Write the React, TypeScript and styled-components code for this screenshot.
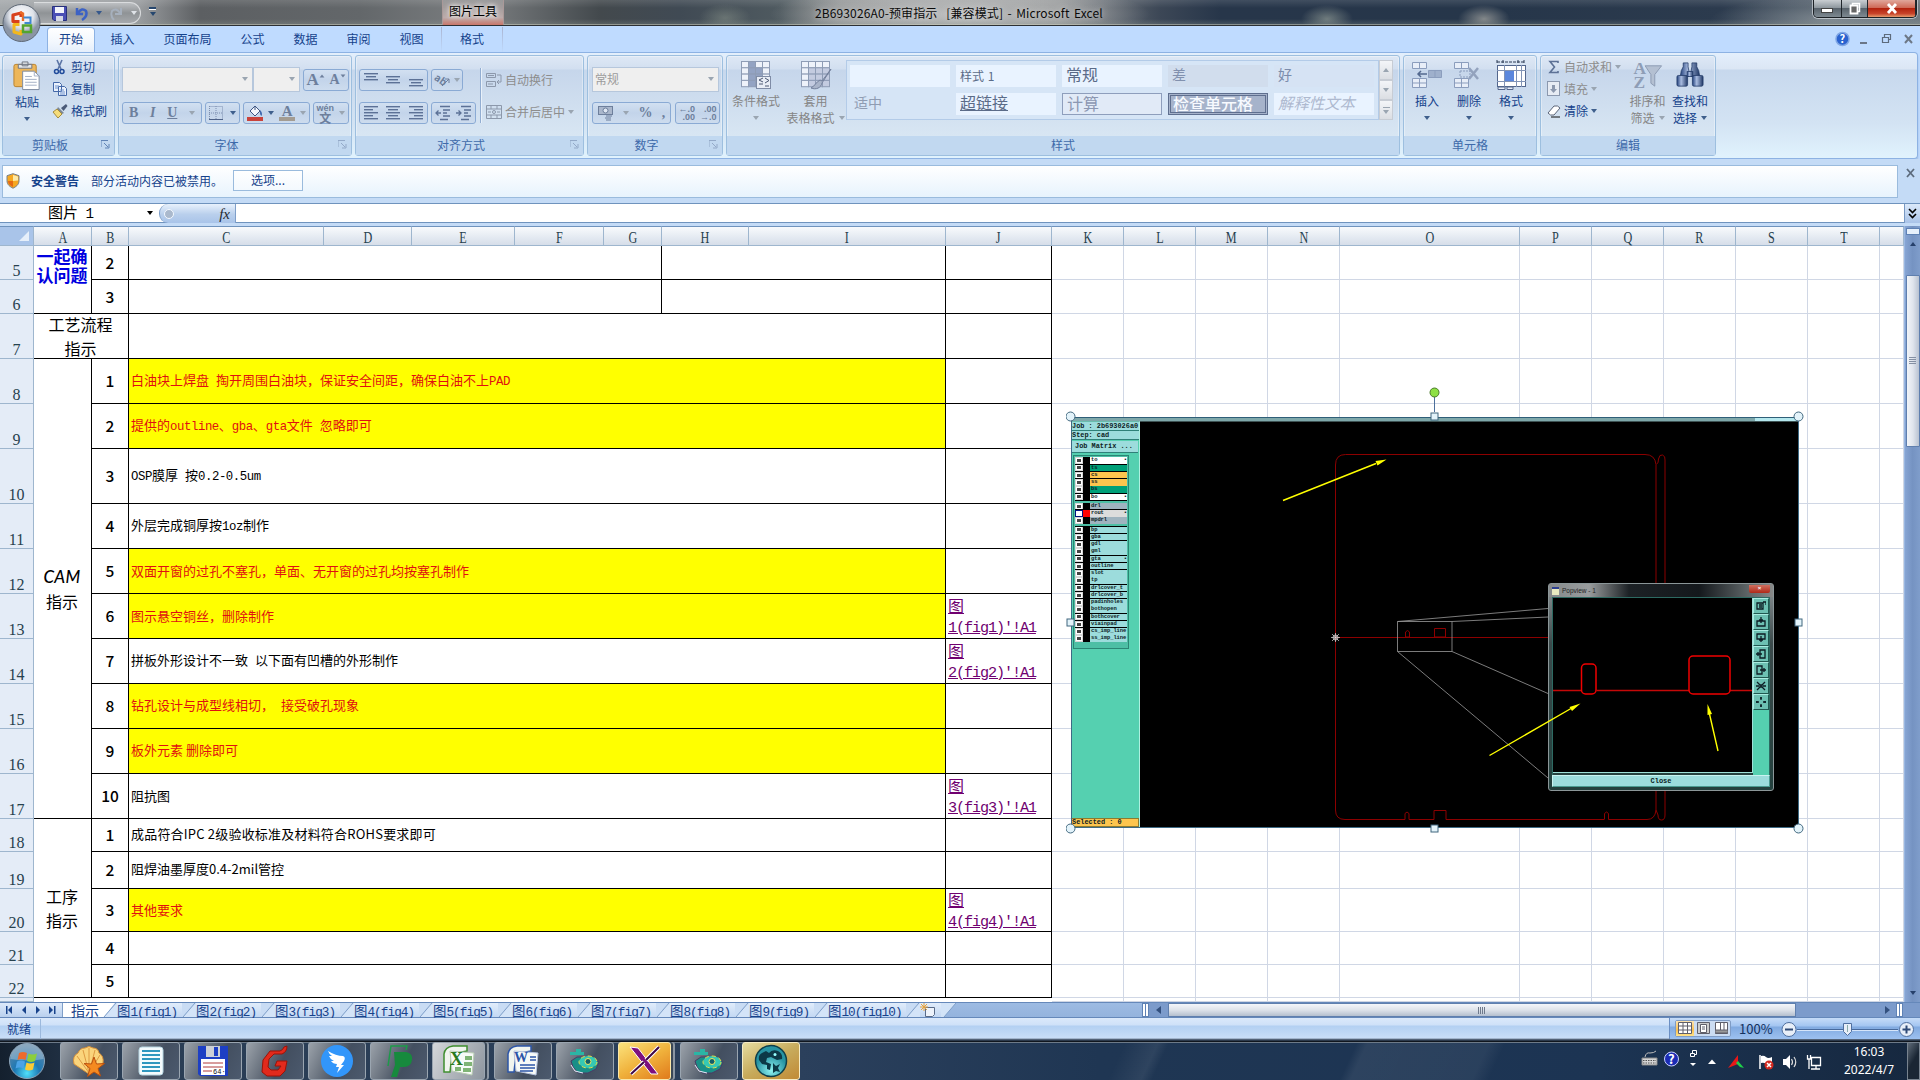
import React from 'react';
import styled, { createGlobalStyle, css } from 'styled-components';

const UI = `"Noto Sans CJK SC", "Liberation Sans", sans-serif`;

const Global = createGlobalStyle`
  * { box-sizing: border-box; }
  body { margin: 0; background: #fff; overflow: hidden; }
`;

const Screen = styled.div`
  width: 1920px;
  height: 1080px;
  display: flex;
  flex-direction: column;
  overflow: hidden;
  position: relative;
  font-family: ${UI};
  font-size: 12px;
  line-height: 16px;
  color: #15428b;
  background: #bfdbff;
  white-space: nowrap;
`;

/* ---------- title bar ---------- */
const TitleBar = styled.div`
  height: 26px;
  flex: none;
  display: flex;
  align-items: flex-start;
  border-bottom: 1px solid #2c3034;
  background:
    linear-gradient(180deg, rgba(255,255,255,.12) 0, transparent 8px, transparent 19px, rgba(150,160,150,.25) 24px, #cfd0c0 25px),
    radial-gradient(ellipse 190px 30px at 960px 14px, rgba(215,215,215,.7), rgba(190,190,190,.5) 60%, transparent),
    radial-gradient(ellipse 26px 14px at 725px 18px, rgba(140,150,140,.5), transparent),
    radial-gradient(ellipse 26px 14px at 1327px 19px, rgba(160,170,160,.6), transparent),
    radial-gradient(ellipse 26px 14px at 1484px 19px, rgba(170,170,165,.7), transparent),
    radial-gradient(ellipse 120px 24px at 1830px 20px, rgba(160,168,172,.6), transparent),
    linear-gradient(90deg, #a5a9ac 0, #989b9e 140px, #5c5f62 200px, #63676a 360px, #7c7f81 480px, #43494d 600px, #404a54 680px, #4f5a60 780px, #848889 840px, #808486 1060px, #3c4756 1160px, #27364a 1220px, #26364a 1500px, #2c3b4e 1720px, #69737b 1920px);
`;
const QuickAccess = styled.div`
  margin: 2px 0 0 34px;
  width: 107px;
  height: 22px;
  padding-left: 18px;
  display: flex;
  align-items: center;
  gap: 7px;
  border: 1px solid #dadcde;
  border-left: none;
  border-radius: 0 11px 11px 0;
  background: linear-gradient(#bcbfc2, #8f9396 50%, #a6a9ac);
`;
const Customize = styled.div`
  margin: 7px 0 0 7px;
  width: 9px;
  display: flex;
  flex-direction: column;
  align-items: center;
  gap: 2px;
  &::before { content: ''; width: 7px; height: 2px; background: #26466e; border-bottom: 1px solid #fff; }
`;
const ContextTitle = styled.div`
  margin-left: 285px;
  width: 62px;
  height: 25px;
  text-align: center;
  line-height: 22px;
  color: #000;
  background: linear-gradient(rgba(170,168,168,.55), rgba(200,180,178,.85) 70%, #c9766a);
  text-shadow: 0 0 4px #fff, 0 0 6px #fff;
  border: solid #a99;
  border-width: 0 1px;
`;
const DocTitle = styled.div`
  margin-left: 311px;
  width: 300px;
  height: 25px;
  line-height: 25px;
  color: #0a0a0a;
  text-shadow: 0 0 6px #ddd;
  letter-spacing: 0.12px;
  word-spacing: 1.6px;
`;
const WinButtons = styled.div`
  margin-left: auto;
  margin-right: 3px;
  display: flex;
  height: 18px;
  width: 104px;
  border: 1px solid #1c2126;
  border-top: 0;
  border-radius: 0 0 5px 5px;
  box-shadow: 0 0 0 1px rgba(230,235,240,.6);
  overflow: hidden;
`;
const WinButton = styled.div<{ $w: number; $close?: boolean }>`
  width: ${p => p.$w}px;
  display: flex;
  align-items: center;
  justify-content: center;
  border-right: 1px solid #20262c;
  background: ${p => p.$close
    ? 'linear-gradient(#e0a79b, #cf6a57 45%, #b3230e 50%, #c8432a 80%, #e59a6c)'
    : 'linear-gradient(#c9ced2, #8f989f 45%, #59636c 50%, #7f8a92)'};
`;

/* ---------- ribbon tabs ---------- */
const TabRow = styled.div`
  height: 26px;
  flex: none;
  display: flex;
  align-items: flex-end;
  padding-left: 47px;
  background: #bfdbff;
`;
const Tab = styled.div<{ $active?: boolean; $context?: boolean }>`
  height: 25px;
  padding: 0 14.5px;
  line-height: 23px;
  ${p => p.$active && css`
    padding: 0 11px;
    margin-right: 1px;
    border: 1px solid #8db2e3;
    border-bottom: 0;
    border-radius: 4px 4px 0 0;
    line-height: 22px;
    background: linear-gradient(#fff, #f2f7fd 60%, #e4eefb);
  `}
  ${p => p.$context && css`
    margin-left: 3px;
    padding: 0 18px;
    border: solid;
    border-width: 0 1px;
    border-image: linear-gradient(#a9b3cf, #bfdbff) 1;
  `}
`;
const MdiButtons = styled.div`
  margin-left: auto;
  height: 26px;
  padding-right: 1px;
  display: flex;
  align-items: center;
`;

/* ---------- ribbon ---------- */
const Ribbon = styled.div`
  height: 107px;
  margin-right: 2px;
  flex: none;
  display: flex;
  padding: 2px 0 0 2px;
  gap: 3px;
  border: 1px solid #8db2e3;
  border-left: 0;
  border-radius: 0 4px 4px 0;
  background: linear-gradient(#e3effc 0, #dbe6f4 16px, #c7d8ed 17px, #d3e3f3 70px, #e0f2fd 104px);
  box-shadow: 0 2px 2px #9db8da;
`;
const Group = styled.div<{ $w: number }>`
  width: ${p => p.$w}px;
  height: 101px;
  flex: none;
  display: flex;
  flex-direction: column;
  border: 1px solid #9dbfdf;
  border-radius: 3px;
  background: linear-gradient(#dee8f5 0, #d2dff0 13px, #c6d6eb 14px, #d8e6f3 80px);
  box-shadow: inset 0 0 0 1px rgba(255,255,255,.35);
`;
const GroupBody = styled.div<{ $pad?: string; $gap?: number }>`
  height: 80px;
  display: flex;
  padding: ${p => p.$pad || '0'};
  gap: ${p => p.$gap || 0}px;
`;
const GroupLabel = styled.div`
  height: 19px;
  position: relative;
  display: flex;
  justify-content: center;
  line-height: 18px;
  padding-right: 17px;
  color: #3e6aaa;
  background: #c1d8f0;
  &.plain { padding-right: 0; }
`;
const Launcher = styled.svg`
  position: absolute;
  right: 4px;
  top: 4px;
`;
const Stack = styled.div<{ $gap?: number; $pad?: string }>`
  display: flex;
  flex-direction: column;
  gap: ${p => p.$gap || 0}px;
  padding: ${p => p.$pad || '0'};
`;
const Line = styled.div<{ $gap?: number; $h?: number }>`
  display: flex;
  align-items: center;
  gap: ${p => p.$gap || 0}px;
  height: ${p => (p.$h ? p.$h + 'px' : 'auto')};
`;
const Caret = styled.i<{ $dim?: boolean; $up?: boolean; $c?: string }>`
  display: inline-block;
  flex: none;
  width: 0;
  height: 0;
  border: 3px solid transparent;
  border-top: 4px solid ${p => p.$c || (p.$dim ? '#9aa5b1' : '#3f5f8c')};
  border-bottom: 0;
  transform: ${p => (p.$up ? 'rotate(180deg)' : 'none')};
`;
const SmallCommand = styled.div<{ $dim?: boolean }>`
  height: 22px;
  display: flex;
  align-items: center;
  gap: 3px;
  color: ${p => (p.$dim ? '#8d8d8d' : '#15428b')};
`;
const BigCommand = styled.div<{ $w: number; $dim?: boolean }>`
  width: ${p => p.$w}px;
  padding-top: 4px;
  display: flex;
  flex-direction: column;
  align-items: center;
  text-align: center;
  line-height: 17px;
  color: ${p => (p.$dim ? '#858585' : '#15428b')};
  svg { margin-bottom: 2px; flex: none; }
`;
const CaretLine = styled.div`
  height: 17px;
  display: flex;
  align-items: center;
  justify-content: center;
  gap: 4px;
`;
const Combo = styled.div<{ $w: number }>`
  width: ${p => p.$w}px;
  height: 25px;
  display: flex;
  align-items: center;
  justify-content: space-between;
  padding: 0 4px 1px 2px;
  color: #9c9c9c;
  background: #efefef;
  border: 1px solid #b6c7dc;
`;
const ButtonBox = styled.div<{ $w: number; $ml?: number }>`
  width: ${p => p.$w}px;
  margin-left: ${p => p.$ml || 0}px;
  height: 22px;
  display: flex;
  align-items: center;
  justify-content: space-around;
  border: 1px solid #8aaad4;
  border-radius: 3px;
  color: #6d7f9c;
  background: linear-gradient(#d2e0f1, #c3d4ea 50%, #cddcee);
`;
const Glyph = styled.span<{ $b?: boolean; $i?: boolean; $u?: boolean; $s?: number }>`
  font-family: "Liberation Serif", serif;
  font-size: ${p => p.$s || 14}px;
  font-weight: ${p => (p.$b ? 700 : 400)};
  font-style: ${p => (p.$i ? 'italic' : 'normal')};
  text-decoration: ${p => (p.$u ? 'underline' : 'none')};
`;
const SizeGlyph = styled.span`
  display: flex;
  align-items: flex-start;
  i { margin-top: 2px; transform: scale(.8); }
  i.up { transform: scale(.8) rotate(180deg); }
`;
const ColorGlyph = styled.span<{ $c: string }>`
  width: 16px;
  height: 16px;
  display: flex;
  align-items: center;
  justify-content: center;
  border-bottom: 4px solid ${p => p.$c};
`;
const Tiny = styled.span`
  font: 700 9px/8px "Liberation Sans", sans-serif;
  text-align: right;
`;
const Wen = styled.b`
  display: block;
  font-size: 12px;
  line-height: 11px;
  text-align: center;
`;
const Spacer = styled.div`
  flex: 1;
`;
const VRule = styled.div`
  width: 2px;
  height: 55px;
  background: #93aed2;
  border-right: 1px solid #e9f1fa;
`;
const Gallery = styled.div`
  width: 533px;
  height: 60px;
  margin-top: 4px;
  padding: 4px 3px;
  display: grid;
  grid-template-columns: repeat(5, 100px);
  grid-template-rows: 22px 22px;
  gap: 6px;
  border: 1px solid #b3cbe8;
  background: #d6e5f6;
`;
const StyleCell = styled.div<{ $kind?: 'plain' | 'bad' | 'good' | 'neutral' | 'calc' | 'check' | 'note' | 'link' | 'normal' }>`
  padding-left: 4px;
  line-height: 19px;
  font-size: 14px;
  color: #5b6b88;
  background: #e9f3ff;
  ${p => p.$kind === 'plain' && css`font-size: 12px; line-height: 21px; word-spacing: 1px;`}
  ${p => p.$kind === 'normal' && css`font-size: 16px;`}
  ${p => p.$kind === 'link' && css`font-size: 16px; text-decoration: underline;`}
  ${p => p.$kind === 'bad' && css`background: #d1dded; color: #8291ae;`}
  ${p => p.$kind === 'good' && css`background: #d6e3f4; color: #7b8cac;`}
  ${p => p.$kind === 'neutral' && css`background: #d6e5f6; color: #8f9cb2;`}
  ${p => p.$kind === 'calc' && css`font-size: 16px; line-height: 18px; border: 1px solid #8e9ebc; background: #e1eaf7; color: #8b97b2;`}
  ${p => p.$kind === 'check' && css`font-size: 16px; font-weight: 500; line-height: 14px; padding-left: 2px; color: #f7faff; background: #a6b3cb; border: 3px double #5f6f8f;`}
  ${p => p.$kind === 'note' && css`font-size: 15.4px; font-style: italic; color: #aeb9cf;`}
`;
const GalleryScroll = styled.div`
  margin-top: 4px;
  width: 14px;
  height: 60px;
  display: flex;
  flex-direction: column;
`;
const GalleryButton = styled.div<{ $more?: boolean }>`
  flex: 1;
  display: flex;
  flex-direction: column;
  gap: 2px;
  align-items: center;
  justify-content: center;
  border: 1px solid #c7ccd4;
  background: linear-gradient(#f3f5f8, #dbdee3);
  ${p => p.$more && css`&::before { content: ''; width: 7px; height: 1px; background: #9aa5b1; }`}
`;

/* ---------- security and formula bars ---------- */
const SecurityBar = styled.div`
  height: 44px;
  flex: none;
  padding: 6px 0 6px 2px;
  display: flex;
  background: #c4dbf6;
`;
const SecurityPanel = styled.div`
  width: 1896px;
  height: 33px;
  display: flex;
  align-items: center;
  padding: 0 0 2px 3px;
  border: 1px solid #9abbdd;
  background: linear-gradient(#fff, #e7f3fd);
  b { margin: 0 12px 0 11px; }
`;
const OptionButton = styled.div`
  width: 70px;
  height: 21px;
  margin-left: 10px;
  text-align: center;
  line-height: 18px;
  border: 1px solid #9abbdd;
  background: linear-gradient(#fff, #f3f9fe);
`;
const CloseMark = styled.div`
  flex: 1;
  padding-left: 3px;
  text-align: center;
`;
const FormulaBar = styled.div`
  height: 23px;
  flex: none;
  display: flex;
  background: #fff;
  border-top: 1px solid #6f93bd;
  border-bottom: 3px solid #c4dbf6;
  box-shadow: inset 0 -1px #6f93bd;
`;
const NameBox = styled.div`
  width: 159px;
  display: flex;
  align-items: center;
  justify-content: space-between;
  padding: 0 6px 2px 48px;
  color: #000;
  font-size: 15px;
`;
const FxArea = styled.div`
  width: 77px;
  height: 19px;
  padding: 0 5px 0 4px;
  display: flex;
  align-items: center;
  justify-content: space-between;
  border: 1px solid #7f9fc9;
  border-width: 0 1px;
  border-radius: 9px 0 0 9px;
  background: linear-gradient(#e8f1fc, #b9cfec 55%, #a9c4e9);
  color: #24292f;
  font: italic 400 15px/18px "Liberation Serif", serif;
  &::before { content: ''; width: 8px; height: 8px; border-radius: 50%; background: #aab9cd; border: 1px solid #f3f8ff; }
`;
const Expand = styled.div`
  margin-left: auto;
  width: 16px;
  display: flex;
  flex-direction: column;
  align-items: center;
  justify-content: center;
  background: linear-gradient(#dbe9fa, #a9c3e8);
  border-left: 1px solid #7898c2;
`;

/* ---------- sheet ---------- */
const Work = styled.div`
  height: 776px;
  flex: none;
  display: flex;
  position: relative;
  overflow: hidden;
`;
const COLS = [34, 58, 37, 195, 88, 103, 89, 58, 87, 197, 106, 72, 72, 72, 72, 180, 72, 72, 72, 72, 72, 24];
const ROWS = [34, 34, 45, 45, 45, 55, 45, 45, 45, 45, 45, 45, 45, 33, 37, 43, 33, 33, 4];
const Sheet = styled.div`
  width: 1904px;
  height: 776px;
  display: grid;
  grid-template-columns: ${COLS.map(c => c + 'px').join(' ')};
  grid-template-rows: 20px ${ROWS.map(r => r + 'px').join(' ')};
  background: #fff;
`;
const ColHead = styled.div<{ $col: number }>`
  grid-column: ${p => p.$col};
  grid-row: 1;
  border-right: 1px solid #9eb6ce;
  border-bottom: 1px solid #9eb6ce;
  border-top: 1px solid #6f93bd;
  text-align: center;
  color: #27414e;
  background: linear-gradient(#f8fafc, #e3e9f1 60%, #d6dee9);
  font: 16px/21px "Liberation Serif", serif;
  span { display: inline-block; transform: scaleX(.76); }
`;
const Corner = styled.div`
  border-right: 1px solid #9eb6ce;
  border-bottom: 1px solid #9eb6ce;
  border-top: 1px solid #6f93bd;
  display: flex;
  justify-content: flex-end;
  align-items: flex-end;
  padding: 0 4px 4px 0;
  background: #a9c4e9;
  &::after { content: ''; border: 5px solid; border-color: transparent #e6effa #e6effa transparent; }
`;
const RowHead = styled.div<{ $row: number }>`
  grid-column: 1;
  grid-row: ${p => p.$row};
  border-right: 1px solid #9eb6ce;
  border-bottom: 1px solid #9eb6ce;
  display: flex;
  align-items: flex-end;
  justify-content: center;
  color: #27414e;
  background: #e4ecf7;
  font: 16px/16px "Liberation Serif", serif;
`;
const Blank = styled.div<{ $col: number; $row: number }>`
  grid-column: ${p => p.$col};
  grid-row: ${p => p.$row};
  border-right: 1px solid #d0d7e5;
  border-bottom: 1px solid #d0d7e5;
`;
const Cell = styled.div<{ $area: string; $fill?: boolean }>`
  grid-area: ${p => p.$area};
  border-right: 1px solid #000;
  border-bottom: 1px solid #000;
  display: flex;
  align-items: center;
  padding-left: 2px;
  font-size: 13px;
  color: ${p => (p.$fill ? '#e01010' : '#000')};
  background: ${p => (p.$fill ? '#ff0' : '#fff')};
`;
const Index = styled(Cell)`
  justify-content: center;
  padding: 0 0 2px;
  font-size: 15.5px;
  font-weight: 500;
`;
const Caption = styled(Cell)`
  flex-direction: column;
  justify-content: center;
  padding: 0 1px 0 0;
  font-size: 16px;
  line-height: 24px;
  &.blue { justify-content: flex-start; color: #0000e0; font-weight: 700; font-size: 17px; line-height: 19px; }
`;
const Cam = styled.span`
  font: italic 500 17px/24px Lato, sans-serif;
  letter-spacing: 0.3px;
`;
const LinkCell = styled(Cell)`
  flex-direction: column;
  align-items: flex-start;
  justify-content: center;
  font-size: 16px;
  line-height: 20px;
  color: #700070;
  text-decoration: underline;
`;
const Half = styled.span<{ $wide?: boolean }>`
  font-family: "Liberation Mono", monospace;
  font-size: 0.95em;
  letter-spacing: ${p => (p.$wide ? '-0.035em' : '-0.074em')};
  white-space: pre;
`;
const Mix = ({ t, wide }: { t: string; wide?: boolean }) => (
  <span>
    {t.split(/([\x20-\x7e]+)/).map((s, i) => (i % 2 ? <Half key={i} $wide={wide}>{s}</Half> : s))}
  </span>
);
const VScroll = styled.div`
  width: 16px;
  display: flex;
  flex-direction: column;
  align-items: center;
  background: linear-gradient(90deg, #87a5d4, #7593c2 50%, #7f9dcb);
  border-left: 1px solid #9ab8e2;
`;
const SplitBox = styled.div`
  margin-top: 2px;
  width: 14px;
  height: 7px;
  border: 1px solid #5f82b5;
  background: #e6f0fb;
`;
const VThumb = styled.div`
  margin-top: 29px;
  width: 14px;
  height: 172px;
  border: 1px solid #5f7fae;
  border-radius: 1px;
  display: flex;
  align-items: center;
  justify-content: center;
  background: linear-gradient(90deg, #f2f5f9, #dfe4ec 50%, #b8c2d1);
  &::after { content: ''; width: 7px; height: 8px; background: repeating-linear-gradient(#8490a3 0 1px, transparent 1px 2px); }
`;

/* ---------- embedded picture ---------- */
const Picture = styled.div`
  position: absolute;
  left: 1071px;
  top: 191px;
  width: 728px;
  height: 411px;
  display: flex;
  border: 1px solid #3d6a84;
  border-top-color: #2f5f78;
  background: #000;
  color: #0c1c24;
`;
const SidePanel = styled.div`
  width: 68px;
  height: 409px;
  display: flex;
  flex-direction: column;
  padding-top: 4px;
  background: #55d0b0;
  border-right: 1px solid #aef0e0;
  font: 700 6.9px/8px "Liberation Mono", monospace;
`;
const InfoRow = styled.div<{ $btn?: boolean }>`
  height: ${p => (p.$btn ? 11 : 8)}px;
  margin: ${p => (p.$btn ? '1px 1px 3px 0' : '0 0 1px 0')};
  padding-left: ${p => (p.$btn ? 3 : 0)}px;
  line-height: ${p => (p.$btn ? 10 : 8)}px;
  background: #9cdcdc;
  box-shadow: 0 1px #2f8078;
`;
const Layers = styled.div`
  width: 56px;
  margin-left: 1px;
  padding: 1px 1px 4px;
  border: 1px solid #2b8574;
  background: #4dbfa5;
  font-size: 5.5px;
  line-height: 6px;
`;
const LayerSet = styled.div`
  background: #000;
  margin-bottom: 2px;
`;
const Layer = styled.div`
  height: 7.25px;
  display: flex;
  align-items: center;
`;
const Check = styled.span<{ $on?: boolean }>`
  width: 8px;
  height: 6.6px;
  flex: none;
  border: 1px solid ${p => (p.$on ? '#001080' : '#d8d8d8')};
  background: ${p => (p.$on ? '#001080' : '#333')};
  display: flex;
  align-items: center;
  justify-content: center;
  &::after { content: ''; width: 4px; height: 3px; background: ${p => (p.$on ? '#fff' : '#444')}; border: 1px solid #fff; }
`;
const Swatch = styled.span<{ $on?: boolean }>`
  width: 7px;
  height: 7px;
  flex: none;
  background: ${p => (p.$on ? '#f00' : '#000')};
`;
const LayerName = styled.span<{ $c: string }>`
  width: 38px;
  height: 6.3px;
  padding-left: 1px;
  display: flex;
  justify-content: space-between;
  letter-spacing: -0.1px;
  background: ${p => p.$c};
`;
const Selected = styled.div`
  margin-top: auto;
  height: 9px;
  border: 1px solid #8c7a30;
  border-left: 0;
  background: #fdc54e;
  line-height: 7px;
`;
const Canvas = styled.svg`
  position: absolute;
  left: 0;
  top: 0;
`;
const Overlay = styled(Canvas)`
  left: -6px;
  top: -34px;
`;
const Popview = styled.div`
  position: absolute;
  left: 476px;
  top: 165px;
  width: 226px;
  height: 208px;
  padding: 0 3px 3px 3px;
  display: flex;
  flex-direction: column;
  border: 1px solid #8b9698;
  border-radius: 3px;
  background: linear-gradient(#8d9396, #3b4a4b 60px, #23403d);
`;
const PopTitle = styled.div`
  height: 13px;
  margin: 0 -3px;
  display: flex;
  align-items: center;
  gap: 3px;
  padding-left: 3px;
  color: #222;
  font: 6.5px/12px "Liberation Sans", sans-serif;
  background: linear-gradient(90deg, #85898b, #999c9d 40px, #1c2125 80px, #14181c 150px, #5f6668 200px, #888);
  &::before { content: ''; width: 7px; height: 6px; background: #e8eac0; border-top: 2px solid #2c3e90; }
`;
const PopClose = styled.div`
  margin: 0 3px 4px auto;
  width: 21px;
  height: 8px;
  text-align: center;
  color: #fff;
  font: 700 6px/7px "Liberation Sans", sans-serif;
  border-radius: 0 0 2px 2px;
  background: linear-gradient(#d07060, #b02818);
`;
const PopBody = styled.div`
  height: 178px;
  display: flex;
  justify-content: space-between;
  border: 1px solid #2d6a62;
  border-bottom: 0;
`;
const PopCanvas = styled.div`
  width: 200px;
  height: 175px;
  background: #000;
  border: solid #9fe0d8;
  border-width: 0 1px 1px 0;
`;
const PopTools = styled.div`
  width: 16px;
  display: flex;
  flex-direction: column;
  background: #55d0b0;
`;
const PopTool = styled.div`
  height: 16px;
  display: flex;
  align-items: center;
  justify-content: center;
  background: #6cc0b2;
  border: 1px solid;
  border-color: #a8ebe0 #205850 #205850 #a8ebe0;
`;
const PopOk = styled.div`
  height: 12px;
  text-align: center;
  font: 700 7px/11px "Liberation Mono", monospace;
  background: #9cdcdc;
  border: 1px solid #c9f3f0;
  border-right-color: #4a9a90;
  border-bottom-color: #4a9a90;
`;

/* ---------- sheet tabs ---------- */
const SheetTabs = styled.div`
  height: 16px;
  flex: none;
  display: flex;
  background: linear-gradient(#9dbbe3, #94b3dd);
  border-top: 1px solid #6588ba;
  border-bottom: 1px solid #6588ba;
  line-height: 14px;
`;
const NavArrows = styled.div`
  width: 63px;
  display: flex;
  align-items: center;
  background: linear-gradient(#dce9fa, #b9d0ee);
  border-right: 1px solid #7f9fc9;
`;
const SheetTab = styled.div<{ $w: number; $active?: boolean }>`
  width: ${p => p.$w}px;
  flex: none;
  padding-left: ${p => (p.$active ? 8 : 0)}px;
  height: 14px;
  display: flex;
  font-size: ${p => (p.$active ? 14 : 13.4)}px;
  color: #17428b;
  background: ${p => (p.$active ? '#fff' : 'linear-gradient(#e1edfb, #c3d8f3)')};
`;
const Slant = styled.svg`
  flex: none;
  margin: 0 -1px;
`;
const HScroll = styled.div`
  margin-left: auto;
  width: 778px;
  display: flex;
  align-items: center;
  background: #7c9bcb;
`;
const HSplit = styled.div`
  width: 7px;
  height: 14px;
  border: 1px solid #5f82b5;
  background: linear-gradient(90deg, #fff 2px, #5f82b5 2px, #5f82b5 3px, #fff 3px);
`;
const HThumb = styled.div`
  width: 628px;
  height: 14px;
  border: 1px solid #5f7fae;
  display: flex;
  align-items: center;
  justify-content: center;
  background: linear-gradient(#f4f6fa, #dde2ea 50%, #b4bfce);
  &::after { content: ''; width: 8px; height: 7px; background: repeating-linear-gradient(90deg, #6f7a8c 0 1px, transparent 1px 2px); }
`;

/* ---------- status bar ---------- */
const StatusBar = styled.div`
  height: 23px;
  flex: none;
  display: flex;
  align-items: center;
  padding: 0 0 2px 7px;
  background: linear-gradient(#dbe9fb 0, #cfe1f8 7px, #b3d0f2 8px, #c9def7 20px, #2b394b 22px);
`;
const StatusRule = styled.div`
  margin-left: 9px;
  width: 1px;
  height: 20px;
  background: #9cb9dd;
`;
const ViewArea = styled.div`
  margin-left: auto;
  width: 251px;
  height: 21px;
  display: flex;
  align-items: center;
  border-left: 1px solid #6b8fc3;
  padding-left: 5px;
  color: #14315f;
  font-size: 13px;
  background: linear-gradient(#c6dcf8, #a3c5f1 8px, #81aae0 9px, #9dc1f0);
`;
const ViewButtons = styled.div`
  width: 56px;
  height: 17px;
  display: flex;
  border: 1px solid #7f9cc5;
  border-radius: 2px;
  background: #cbdcf2;
`;
const ViewButton = styled.div<{ $on?: boolean }>`
  flex: 1;
  display: flex;
  align-items: center;
  justify-content: center;
  background: ${p => (p.$on ? 'linear-gradient(#fbe3b2, #fbc04e 60%, #fde28b)' : 'transparent')};
`;
const Percent = styled.div`
  width: 49px;
  padding-left: 8px;
`;

/* ---------- taskbar ---------- */
const Taskbar = styled.div`
  height: 39px;
  flex: none;
  display: flex;
  align-items: center;
  padding-left: 8px;
  border-top: 1px solid #10161e;
  box-shadow: inset 0 1px #6d7a88;
  background:
    linear-gradient(115deg, transparent 1020px, rgba(255,255,255,.07) 1050px, transparent 1060px, transparent 1230px, rgba(255,255,255,.07) 1240px, rgba(255,255,255,.06) 1350px, transparent 1365px),
    linear-gradient(90deg, #14202e, #2a3d54 120px, #2b405c 800px, #1f3653 1100px, #1c3453 1600px, #16283f 1920px);
`;
const Tasks = styled.div`
  margin-left: 14px;
  display: flex;
`;
const Task = styled.div<{ $tone?: 'active' | 'orange' | 'gold'; $stack?: boolean }>`
  width: ${p => (p.$stack ? 53 : 58)}px;
  height: 38px;
  margin-right: ${p => (p.$stack ? 9 : 4)}px;
  display: flex;
  align-items: center;
  justify-content: center;
  border: 1px solid #9aa5b0;
  border-radius: 3px;
  background: linear-gradient(115deg, #9ba2aa 0, #69727e 35%, #434f60 60%, #4c5a6e);
  ${p => p.$stack && css`box-shadow: 2px 0 0 #3a4756, 4px 0 0 #8b96a2;`}
  ${p => p.$tone === 'active' && css`background: linear-gradient(115deg, #d4d7da, #b0b5bb 50%, #8e969f);`}
  ${p => p.$tone === 'orange' && css`border-color: #fae7a8; background: linear-gradient(150deg, #fbe27c, #f0b23c 50%, #e07a1c);`}
  ${p => p.$tone === 'gold' && css`border-color: #f5ebc4; background: linear-gradient(150deg, #e6dca0, #c7ab5c 50%, #c18a35);`}
`;
const Tray = styled.div`
  margin-left: auto;
  display: flex;
  align-items: center;
  svg { flex: none; }
`;
const Clock = styled.div`
  width: 66px;
  text-align: center;
  color: #fff;
  font: 12px/18px "Noto Sans", sans-serif;
`;
const ShowDesktop = styled.div`
  margin-left: 5px;
  width: 13px;
  height: 38px;
  border: 1px solid #78838f;
  background: linear-gradient(120deg, #5f6b78, #1a2634 50%);
`;
const Orb = styled.svg`
  position: absolute;
  left: 1px;
  top: 2px;
`;

/* ---------- icons ---------- */
const LaunchIcon = ({ dim }: { dim?: boolean }) => (
  <Launcher width="9" height="9"><path d="M0 7V.500h7M3 3l4 4M8 4v4H4" fill="none" stroke={dim ? '#93a9c8' : '#5f83b5'} /></Launcher>
);
const Bars = ({ rows, y = 0 }: { rows: [number, number][]; y?: number }) => (
  <svg width="16" height="18">
    {rows.map(([x, w], i) => <rect key={i} x={x} y={y + i * 3} width={w} height="1.4" fill="#5c7196" />)}
  </svg>
);
const IndentIcon = ({ out }: { out?: boolean }) => (
  <svg width="16" height="18" fill="none" stroke="#5c7196" strokeWidth="1.300">
    <path d="M5 2.500h10M8 6h7M8 9h4M8 12h7M5 15.500h8" />
    <path d={out ? 'M6 9H1m2.500-2.500L1 9l2.500 2.500' : 'M0 9h5M2.500 6.500L5 9l-2.500 2.500'} />
  </svg>
);
const GridIcon = ({ kind }: { kind: 'cond' | 'table' }) => (
  <svg width="32" height="30" viewBox="0 0 32 30">
    <g fill="#eef2fa" stroke="#8e9cb5" strokeWidth="1">
      {[0, 1, 2, 3].map(r => [0, 1, 2, 3].map(c => (
        <rect key={r + '-' + c} x={1.5 + c * 7} y={1.5 + r * 6.3} width="7" height="6.3"
          fill={kind === 'cond' ? (c === 1 || (c === 2 && r > 0 && r < 3) ? '#93a3c3' : '#eef2fa') : (r && c ? '#c3cbe0' : '#eef2fa')} />
      )))}
    </g>
    {kind === 'cond'
      ? <g><rect x="16.500" y="16.500" width="14" height="12" fill="#e8edf6" stroke="#7f8ca6" /><path d="M23 18l-4 2 4 2M19 24h4M25 18l4 2.500-4 2.500M25 26h4" fill="none" stroke="#4c5873" /></g>
      : <path d="M31 9L22 21l-2-1c-4 2-5 6-9 8 5 2 10 0 11-5z" fill="#a9b4c9" stroke="#73809c" />}
  </svg>
);
const CellsIcon = ({ kind }: { kind: 'ins' | 'del' }) => (
  <svg width="32" height="30" viewBox="0 0 32 30">
    <g fill="#e8eef8" stroke="#8b9dbd">
      <path d="M1.500 2.500h14v6h-14zM8.500 2.500v6M1.500 18.500h14v9h-14zM8.500 18.500v9M1.500 23h14" />
      {kind === 'ins'
        ? <><path d="M17.500 10.500h13v7h-13zM24 10.500v7" fill="#9fb0cc" /><path d="M16 14H7m3-3l-3 3 3 3" fill="none" stroke="#54698f" strokeWidth="1.500" /></>
        : <><path d="M7 11h10v6H7z" strokeDasharray="2 1" fill="none" /><path d="M16 8l9 11M25 8l-9 11" stroke="#93a2bd" strokeWidth="2.500" /></>}
    </g>
  </svg>
);
const FormatIcon = () => (
  <svg width="32" height="30" viewBox="0 0 32 30">
    <path d="M2 2h27M2 0v4M29 0v4M8 0v4M23 0v4" stroke="#2a3a55" strokeDasharray="3 1" fill="none" />
    <rect x="2.500" y="5.500" width="28" height="21" fill="#fff" stroke="#53668c" />
    <path d="M9.500 5v22M21.500 5v22M26.500 5v22M2 10.500h29M2 21.500h29" stroke="#8193b5" />
    <rect x="10" y="11" width="9" height="10" fill="#5b87dd" />
    <path d="M3 27h7v2.500H3zM12 27h6v2.500h-6z" fill="#e9eef8" stroke="#53668c" />
  </svg>
);
const PasteIcon = () => (
  <svg width="30" height="31" viewBox="0 0 30 32">
    <rect x="1.500" y="4.500" width="23" height="23" rx="2" fill="#edb65a" stroke="#b9822f" />
    <path d="M6 4.500h14v4H6zM10 2h6v4h-6z" fill="#e3e6ea" stroke="#6d7480" />
    <path d="M10.500 11.500h12l5 5v14h-17z" fill="#fff" stroke="#7d8aa0" />
    <path d="M22.500 11.500v5h5M13 17h7M13 20h12M13 23h12M13 26h12" fill="none" stroke="#a3b0c5" />
  </svg>
);
const AZIcon = () => (
  <svg width="30" height="30" viewBox="0 0 30 31">
    <g fontFamily="Liberation Serif, serif" fontWeight="700" fontSize="18" fill="#8e9db6">
      <text x="0" y="14">A</text><text x="0" y="29">Z</text>
    </g>
    <path d="M12 6h17l-7 9v12l-4-3v-9z" fill="#b4c0d2" stroke="#8c9ab2" />
  </svg>
);
const Binoculars = () => (
  <svg width="30" height="30" viewBox="0 0 30 31">
    <defs><linearGradient id="bino"><stop offset="0" stopColor="#23417c" /><stop offset=".4" stopColor="#a9bce0" /><stop offset="1" stopColor="#1f3765" /></linearGradient></defs>
    <g fill="url(#bino)" stroke="#223a68" strokeWidth=".8">
      <path d="M8 3h5v4l1 5v5H5l1-6 2-4zM17 3h5v4l2 4 1 6h-9v-5l1-5z" />
      <rect x="1.500" y="16" width="11" height="11" rx="1.500" /><rect x="17.500" y="16" width="11" height="11" rx="1.500" />
      <rect x="12" y="12" width="6" height="5" />
    </g>
  </svg>
);
const Scissors = () => (
  <svg width="16" height="16"><path d="M5 1l4 9M10 1L6 10" stroke="#5b74a5" strokeWidth="1.600" /><circle cx="4.500" cy="12.500" r="2" fill="none" stroke="#1f4a9a" strokeWidth="1.500" /><circle cx="10" cy="12.500" r="2" fill="none" stroke="#1f4a9a" strokeWidth="1.500" /></svg>
);
const CopyIcon = () => (
  <svg width="16" height="16"><path d="M1.500 1.500h6l2 2v7h-8zM6.500 5.500h6l2 2v7h-8z" fill="#eaf1fc" stroke="#4468a8" /><path d="M3 5h4M3 7h3M8 9h4M8 11h5M8 13h5" stroke="#6f92cc" /></svg>
);
const BrushIcon = () => (
  <svg width="16" height="16"><path d="M9 5l5-4 1.500 2-4 5z" fill="#4a5a78" /><path d="M6 4l6 6-2 1-5-5z" fill="#7c8794" /><path d="M5 6l5 5-4 4-5-6z" fill="#f5dc7a" stroke="#a58b3c" /></svg>
);
const WrapIcon = ({ m }: { m?: boolean }) => (
  <svg width="16" height="18" fill="none" stroke="#8c98ab">
    {m ? <><path d="M.5 2.500h15v13H.500zM.5 6h15M.5 12h15M5 2.500V6M11 2.500V6M5 12v3.500M11 12v3.500" /><path d="M2 9h3M14 9h-3" /><circle cx="8" cy="9" r="1.500" /></>
      : <><path d="M.5 2.500h9v4H.500zM.5 10.500h9v5H.500zM2 4.500h6M2 13h5" /><path d="M11 4h4v7h-4m2-2l-2 2 2 2" /></>}
  </svg>
);
const Bucket = () => (
  <svg width="16" height="12"><path d="M3 6l5-5 5 5-5 5z" fill="#f4f7fc" stroke="#3f5683" /><path d="M13 5q3 3 1.500 6-2-1-1.500-6" fill="#3d66ae" /><path d="M8 1v4" stroke="#3f5683" /></svg>
);
const Shield = () => (
  <svg width="14" height="16"><path d="M7 .7l6 2v5c0 4-3 6-6 7.500-3-1.500-6-3.500-6-7.500v-5z" fill="#f6a821" stroke="#76808c" /><path d="M7 2l5 1.500v4L7 8z" fill="#fde9a6" /><path d="M2 8h5v6C4 12.500 2 11 2 8z" fill="#e56a14" /></svg>
);
const OfficeOrb = () => (
  <Orb width="41" height="42" viewBox="0 0 41 42">
    <defs><radialGradient id="orb" cx=".5" cy=".3"><stop offset="0" stopColor="#fff" /><stop offset=".65" stopColor="#dfe3ea" /><stop offset="1" stopColor="#8b95a5" /></radialGradient></defs>
    <circle cx="20.500" cy="21" r="18.500" fill="url(#orb)" stroke="#5d6774" />
    <g fill="none">
      <path d="M18.500 19.500h-6.500v-6.500l8-2v4" stroke="#d8401c" strokeWidth="3.200" strokeLinejoin="round" />
      <path d="M19 10.500l3 1v7.500" stroke="#ea6b25" strokeWidth="2.400" />
      <path d="M22.500 15.500h7v5.500h-6" stroke="#3f87cf" strokeWidth="2" />
      <path d="M18.500 22.500h-5.500v7.500l7 2v-4" stroke="#f3b81e" strokeWidth="3" strokeLinejoin="round" />
      <path d="M22 23.500h8v6.500h-8z" stroke="#54a52e" strokeWidth="2.500" />
    </g>
  </Orb>
);
const StartOrb = () => (
  <svg width="38" height="38" viewBox="0 0 38 38">
    <defs><radialGradient id="start" cx=".5" cy=".85" r=".8"><stop offset="0" stopColor="#4fe0fa" /><stop offset=".45" stopColor="#1d78b4" /><stop offset="1" stopColor="#5f86a6" /></radialGradient></defs>
    <circle cx="19" cy="19" r="17.500" fill="url(#start)" stroke="#8da4b8" />
    <path d="M2.500 17a16.500 15 0 0 1 33 0q-16 3-33 0z" fill="#fff" opacity=".28" />
    <path d="M11 11q4-2 8 0l-1.500 7q-4-2-8 0z" fill="#ee6b2d" />
    <path d="M20.500 11.500q4 2 8.500 0l-2 7.500q-4 2-8 0z" fill="#8ccf3c" />
    <path d="M9 19.500q4-2 8 0l-1.500 7q-4-2-8 0z" fill="#4ba3e6" />
    <path d="M18.500 20.500q4 2 8 0l-1.500 7q-4 2-8 0z" fill="#fbcb35" />
  </svg>
);
const Shell = () => (
  <svg width="34" height="34"><path d="M17 30L2 20Q0 12 6 9q2-5 7-5 4-3 8 0 5 0 6 5 5 3 4 10z" fill="#fad47c" stroke="#d9923a" /><path d="M17 29L5 12M17 29L11 6M17 29V4M17 29l6-23M17 29l11-18" stroke="#dd9a42" /><path d="M22 13l2.500 7 8-.500-6.500 5 2.500 7.500-6.500-4-6.500 4.500 2.500-8-6-5 7.500.5z" fill="#f58a20" stroke="#b9500e" /></svg>
);
const Notes = () => (
  <svg width="26" height="30"><rect x="1" y="1" width="24" height="28" rx="3" fill="#f4fbfd" stroke="#b6d6e2" />{[4, 8, 12, 16, 20, 24].map(y => <rect key={y} x="4" y={y} width="18" height="2" fill="#2f97bf" />)}</svg>
);
const Floppy = () => (
  <svg width="30" height="32"><path d="M0 1h30v30H2l-2-2z" fill="#1d3fc4" /><rect x="8" y="1" width="14" height="11" fill="#cdd0d6" /><rect x="16" y="2" width="4" height="9" fill="#1d3fc4" /><path d="M3 14h24v16H3z" fill="#fff" /><path d="M5 18h20M5 22h20M5 26h9" stroke="#b03a3a" /><text x="15" y="29" fontSize="7" fontFamily="Liberation Mono" fill="#111">64·</text></svg>
);
const GIcon = () => (
  <svg width="32" height="32"><path d="M28 1q0 6-5 8h-8l-5 5-1 8 3 3h7l3-4h-6l2-5h10l-2 10-5 5H8l-5-4 1-12 7-9h10q3-1 4-4z" fill="#e22a1c" stroke="#9c1308" /></svg>
);
const Bird = () => (
  <svg width="34" height="34"><circle cx="17" cy="17" r="16" fill="#3296fa" /><path d="M8 7q8 5 15 5 3 1 1 5l-3 4h3l-7 8 2-6h-3l1-3q-4 0-6-3l3 0q-4-2-5-5h3q-3-2-4-5z" fill="#fff" /></svg>
);
const PIcon = () => (
  <svg width="32" height="34"><path d="M5 22L8 2h16l-1 4" fill="none" stroke="#1d9a4a" strokeWidth="1.500" /><path d="M11 8h12q7 1 6 8-1 7-8 7h-4l-3 10H8l4-12z" fill="#178a3d" /></svg>
);
const OfficeDoc = ({ c, t }: { c: string; t: string }) => (
  <svg width="34" height="32" viewBox="0 0 34 32">
    <path d="M2 27V9q1-7 9-8h14v5L10 9 8 27z" fill="#f1f5ef" stroke={c} strokeWidth="1.500" />
    <path d="M8 6l24 2-2 22-20-4z" fill="#f7faf7" stroke={t === 'X' ? '#b9cdb4' : '#b4c2dd'} />
    {t === 'X'
      ? <g fill={c}><path d="M23 11h7v4h-7zM22 17h8v4h-8zM21 23h8v4h-8zM13 22h6v4h-6z" opacity=".65" /></g>
      : <path d="M24 12h6M24 15h6M14 20h15M14 23h15M14 26h13" stroke={c} strokeWidth="1.500" />}
    <text x="8" y={t === 'X' ? 20 : 17} fontFamily="Liberation Serif, serif" fontWeight="700" fontSize={t === 'X' ? 18 : 14} fill={t === 'X' ? '#2a7a1f' : c}>{t}</text>
  </svg>
);
const Eye = () => (
  <svg width="32" height="28"><path d="M1 5h6V2h5v3h3v3H1z" fill="#2bb5a5" /><path d="M2 14l6-4h14l8 5-3 7-8 4H9l-5-6z" fill="#1a8f87" stroke="#4b3a66" /><ellipse cx="19" cy="15" rx="9" ry="6" fill="#35c8b4" stroke="#e6e04a" strokeDasharray="4 3" /><circle cx="19" cy="14.500" r="3" fill="#135e6a" stroke="#f0ea60" /><path d="M2 18l4 6 8 2" stroke="#e8e8f8" fill="none" /></svg>
);
const XIcon = () => (
  <svg width="34" height="32"><path d="M2 2l8 1 20 26h-7z" fill="#7d107e" stroke="#fff" /><path d="M31 2L18 15M16 17L3 29" stroke="#fff" strokeWidth="4" /><path d="M31 2L18 15M16 17L3 29" stroke="#400848" strokeWidth="2" /></svg>
);
const Gecko = () => (
  <svg width="34" height="34"><defs><radialGradient id="gek" cy=".8"><stop offset="0" stopColor="#8ff3f2" /><stop offset="1" stopColor="#2794a3" /></radialGradient></defs><circle cx="17" cy="17" r="15.500" fill="url(#gek)" stroke="#0f3f4a" strokeWidth="1.500" /><path d="M8 9l4-2 3 2q3-4 9-2 5 3 4 8l-5 1-6-3-4 1-1 4 5 2-1 6-3-1 0-4-5-1-3-4q-1-5 3-7z" fill="#0c3947" /><path d="M19 19l3 3 4-2-2 4 2 4-4-1-3 2 0-4z" fill="#0c3947" /><circle cx="21" cy="10.500" r="1.500" fill="#9ff" /></svg>
);
const SlantIcon = ({ first }: { first?: boolean }) => (
  <Slant width="15" height="14">
    <path d="M0 0h12L1 14H0z" fill={first ? '#fff' : '#c9dcf4'} />
    <path d="M12 0h3v14H1z" fill="#d4e4f8" /><path d="M13 0L1 14" stroke="#7f9fc9" />
  </Slant>
);

/* ---------- data ---------- */
const letters = 'ABCDEFGHIJKLMNOPQRST'.split('');
const items: { row: number; n: number; text?: string; fill?: boolean; link?: number; sans?: boolean }[] = [
  { row: 8, n: 1, text: '白油块上焊盘 掏开周围白油块，保证安全间距，确保白油不上PAD', fill: true },
  { row: 9, n: 2, text: '提供的outline、gba、gta文件 忽略即可', fill: true },
  { row: 10, n: 3, text: 'OSP膜厚 按0.2-0.5um' },
  { row: 11, n: 4, text: '外层完成铜厚按1oz制作' },
  { row: 12, n: 5, text: '双面开窗的过孔不塞孔，单面、无开窗的过孔均按塞孔制作', fill: true },
  { row: 13, n: 6, text: '图示悬空铜丝，删除制作', fill: true, link: 1 },
  { row: 14, n: 7, text: '拼板外形设计不一致 以下面有凹槽的外形制作', link: 2 },
  { row: 15, n: 8, text: '钻孔设计与成型线相切， 接受破孔现象', fill: true },
  { row: 16, n: 9, text: '板外元素 删除即可', fill: true, sans: true },
  { row: 17, n: 10, text: '阻抗图', link: 3 },
  { row: 18, n: 1, text: '成品符合IPC 2级验收标准及材料符合ROHS要求即可', sans: true },
  { row: 19, n: 2, text: '阻焊油墨厚度0.4-2mil管控', sans: true },
  { row: 20, n: 3, text: '其他要求', fill: true, link: 4 },
  { row: 21, n: 4 },
  { row: 22, n: 5 },
];
const SansText = styled.span<{ $ls: number }>`
  letter-spacing: ${p => p.$ls}px;
  padding-bottom: 2px;
`;
const layerSets: [string, string, string?][][] = [
  [['to', '#fff', '▪'], ['ts', '#00a078'], ['cs', '#fdc54e'], ['ss', '#fdc54e'], ['bs', '#00a078'], ['bo', '#fff', '▪']],
  [['drl', '#9fb3bf'], ['rout', '#dcdcdc', '▪'], ['mpdrl', '#9fb3bf']],
  ['bp', 'gba', 'gdl', 'gml', 'gta', 'outline', 'slot', 'tp', 'drlcover_t', 'drlcover_b', 'padinholes', 'bothopen', 'bothcover', 'viainpad', 'cs_imp_line', 'ss_imp_line']
    .map(n => [n, '#9cdcdc', n === 'gta' ? '▪' : ''] as [string, string, string]),
];
/* grid line of a worksheet row; the column header takes the first track */
const gl = (row: number) => row - 3;
const area = (r1: number, c1: number, r2: number, c2: number) => `${gl(r1)} / ${c1} / ${gl(r2)} / ${c2}`;

const toolGlyphs = ['M1 2h6v6H1zM7 1h3v3M3 4h3M3 6h3', 'M1 4h8v5H1zM5 0v6M3 3h4', 'M1 1h8v5H1zM5 3v6M3 7h4', 'M4 1h5v8H4zM0 5h6M2 3v4', 'M1 1h5v8H1zM4 5h6M8 3v4', 'M1 1l3 3M9 1L6 4M1 9l3-3M9 9L6 6M4 4h2v2H4zM0 5h3M7 5h3', 'M5 0v3M5 7v3M0 5h3M7 5h3M4 1h2M4 9h2M1 4v2M9 4v2'];

function RibbonView() {
  return (
    <Ribbon>
      <Group $w={113}>
        <GroupBody>
          <BigCommand $w={48}><PasteIcon />粘贴<CaretLine><Caret /></CaretLine></BigCommand>
          <Stack $pad="0 0 0 1px">
            <SmallCommand><Scissors />剪切</SmallCommand>
            <SmallCommand><CopyIcon />复制</SmallCommand>
            <SmallCommand><BrushIcon />格式刷</SmallCommand>
          </Stack>
        </GroupBody>
        <GroupLabel>剪贴板<LaunchIcon /></GroupLabel>
      </Group>
      <Group $w={234}>
        <Stack $gap={10} $pad="11px 0 0 3px">
          <Line $h={25}>
            <Combo $w={131}><span /><Caret $dim /></Combo><Combo $w={47}><span /><Caret $dim /></Combo>
            <ButtonBox $w={46} $ml={3}>
              <SizeGlyph><Glyph $b $s={17}>A</Glyph><Caret className="up" $c="#6d7f9c" /></SizeGlyph>
              <SizeGlyph><Glyph $b $s={14}>A</Glyph><Caret $c="#6d7f9c" /></SizeGlyph>
            </ButtonBox>
          </Line>
          <Line $gap={3} $h={22}>
            <ButtonBox $w={80}><Glyph $b>B</Glyph><Glyph $i $b>I</Glyph><Glyph $u $b>U</Glyph><Caret $dim /></ButtonBox>
            <ButtonBox $w={35}><svg width="14" height="14"><path d="M.5 .5h13v13M7 0v13M.5 0v13M0 7h13" fill="none" stroke="#7c8fb0" strokeDasharray="1 1" /><path d="M0 13.500h14" stroke="#4d6289" /></svg><Caret /></ButtonBox>
            <ButtonBox $w={67}><ColorGlyph $c="#c9433c"><Bucket /></ColorGlyph><Caret /><ColorGlyph $c="#a39c92"><Glyph $b $s={15}>A</Glyph></ColorGlyph><Caret $dim /></ButtonBox>
            <ButtonBox $w={36}><Stack><Tiny>wén</Tiny><Wen>文</Wen></Stack><Caret $dim /></ButtonBox>
          </Line>
        </Stack>
        <Spacer /><GroupLabel>字体<LaunchIcon dim /></GroupLabel>
      </Group>
      <Group $w={229}>
        <GroupBody $pad="0 0 0 3px" $gap={4}>
          <Stack $gap={11} $pad="13px 0 0 0">
            <Line $gap={3}>
              <ButtonBox $w={69}><Bars y={2} rows={[[1, 14], [3, 10], [1, 14]]} /><Bars y={5} rows={[[1, 14], [3, 10], [1, 14]]} /><Bars y={8} rows={[[1, 14], [3, 10], [1, 14]]} /></ButtonBox>
              <ButtonBox $w={32}><svg width="17" height="16"><text x="0" y="10" fontSize="10" fontWeight="700" fill="#6d7f9c" transform="rotate(35 4 8)">ab</text><path d="M8 14l7-7m-4 0h4v4" fill="none" stroke="#6d7f9c" /></svg><Caret $dim /></ButtonBox>
            </Line>
            <Line $gap={3}>
              <ButtonBox $w={69}><Bars y={2} rows={[[1, 14], [1, 9], [1, 14], [1, 9], [1, 14]]} /><Bars y={2} rows={[[1, 14], [3, 10], [1, 14], [3, 10], [1, 14]]} /><Bars y={2} rows={[[1, 14], [6, 9], [1, 14], [6, 9], [1, 14]]} /></ButtonBox>
              <ButtonBox $w={45}><IndentIcon out /><IndentIcon /></ButtonBox>
            </Line>
          </Stack>
          <Stack $pad="12px 0 0 0"><VRule /></Stack>
          <Stack $gap={10} $pad="13px 0 0 0">
            <SmallCommand $dim><WrapIcon />自动换行</SmallCommand>
            <SmallCommand $dim><WrapIcon m />合并后居中<Caret $dim /></SmallCommand>
          </Stack>
        </GroupBody>
        <GroupLabel>对齐方式<LaunchIcon dim /></GroupLabel>
      </Group>
      <Group $w={136}>
        <Stack $gap={10} $pad="11px 0 0 4px">
          <Combo $w={127}>常规<Caret $dim /></Combo>
          <Line $gap={4} $h={22}>
            <ButtonBox $w={79}><svg width="16" height="16"><rect x=".5" y="1.500" width="14" height="8" fill="#aab7cc" stroke="#6d7f9c" /><circle cx="7.500" cy="5.500" r="2.500" fill="#dfe7f3" stroke="#6d7f9c" /><path d="M8 11h6M7 13h6M8 15h5" stroke="#6d7f9c" /></svg><Caret $dim /><Glyph $b>%</Glyph><Glyph $b>,</Glyph></ButtonBox>
            <ButtonBox $w={45}><Tiny>←.0<br />.00</Tiny><Tiny>.00<br />→.0</Tiny></ButtonBox>
          </Line>
        </Stack>
        <Spacer /><GroupLabel>数字<LaunchIcon dim /></GroupLabel>
      </Group>
      <Group $w={674}>
        <GroupBody>
          <BigCommand $w={58} $dim><GridIcon kind="cond" />条件格式<CaretLine><Caret $dim /></CaretLine></BigCommand>
          <BigCommand $w={61} $dim><GridIcon kind="table" />套用<CaretLine>表格格式<Caret $dim /></CaretLine></BigCommand>
          <Gallery>
            <StyleCell /><StyleCell $kind="plain">样式 1</StyleCell><StyleCell $kind="normal">常规</StyleCell><StyleCell $kind="bad">差</StyleCell><StyleCell $kind="good">好</StyleCell>
            <StyleCell $kind="neutral">适中</StyleCell><StyleCell $kind="link">超链接</StyleCell><StyleCell $kind="calc">计算</StyleCell><StyleCell $kind="check">检查单元格</StyleCell><StyleCell $kind="note">解释性文本</StyleCell>
          </Gallery>
          <GalleryScroll><GalleryButton><Caret $up $dim /></GalleryButton><GalleryButton><Caret $dim /></GalleryButton><GalleryButton $more><Caret $dim /></GalleryButton></GalleryScroll>
        </GroupBody>
        <GroupLabel className="plain">样式</GroupLabel>
      </Group>
      <Group $w={134}>
        <GroupBody $pad="0 0 0 2px">
          <BigCommand $w={42}><CellsIcon kind="ins" />插入<CaretLine><Caret /></CaretLine></BigCommand>
          <BigCommand $w={42}><CellsIcon kind="del" />删除<CaretLine><Caret /></CaretLine></BigCommand>
          <BigCommand $w={42}><FormatIcon />格式<CaretLine><Caret /></CaretLine></BigCommand>
        </GroupBody>
        <GroupLabel className="plain">单元格</GroupLabel>
      </Group>
      <Group $w={176}>
        <GroupBody $pad="0 0 0 6px">
          <Stack>
            <SmallCommand $dim><svg width="14" height="14"><path d="M11 3V1.500H3l4.500 5.500L3 12.500h8V11" fill="none" stroke="#5c7196" strokeWidth="1.600" /></svg>自动求和<Caret $dim /></SmallCommand>
            <SmallCommand $dim><svg width="14" height="16"><rect x=".5" y=".5" width="12" height="14" fill="#e6ebf3" stroke="#8b98ae" /><path d="M5 4h3v4h2l-3.500 4L3 8h2z" fill="#8b98ae" /></svg>填充<Caret $dim /></SmallCommand>
            <SmallCommand><svg width="14" height="14"><path d="M1 9l6-7q4-1 6 2L7 11q-4 1-6-2z" fill="#fff" stroke="#5a6478" /><path d="M4 13h9" stroke="#111" /></svg>清除<Caret /></SmallCommand>
          </Stack>
          <Stack $pad="0 0 0 5px"><BigCommand $w={43} $dim><AZIcon />排序和<CaretLine>筛选<Caret $dim /></CaretLine></BigCommand></Stack>
          <BigCommand $w={42}><Binoculars />查找和<CaretLine>选择<Caret /></CaretLine></BigCommand>
        </GroupBody>
        <GroupLabel className="plain">编辑</GroupLabel>
      </Group>
    </Ribbon>
  );
}

function PictureView() {
  return (
    <Picture>
      <SidePanel>
        <InfoRow>Job : 2b693026a0</InfoRow>
        <InfoRow>Step: cad</InfoRow>
        <InfoRow $btn>Job Matrix ...</InfoRow>
        <Layers>
          {layerSets.map((set, i) => (
            <LayerSet key={i}>
              {set.map(([n, c, mark]) => (
                <Layer key={n}><Check $on={n === 'rout'} /><Swatch $on={n === 'rout'} /><LayerName $c={c}>{n}<span>{mark}</span></LayerName></Layer>
              ))}
            </LayerSet>
          ))}
        </Layers>
        <Selected>Selected : 0</Selected>
      </SidePanel>
      <Canvas width="726" height="409" viewBox="1072 418 726 409">
        <rect x="1072" y="418" width="726" height="3.500" fill="#7fa8aa" /><rect x="1755" y="418" width="43" height="3" fill="#b5e8ee" />
        <g fill="none" stroke="#8c0000" strokeWidth="1">
          <path d="M1604 819.500H1446V810.500h-12v9H1409v-6q-2-3-4 0v6H1345q-9.500 0-9.500-9.500V465q0-10.500 10-10.500H1645q10 0 11 10V810q-1 9.500-9 9.500H1608.500v-6q-2-3-4 0v6" />
          <path d="M1656.500 464q2 0 2-5 1-5 4-4t2.500 5V815q0 5-3.500 5t-3.500-5l-2-5" />
          <path d="M1335 637.500H1548M1405.500 637v-5q2-3 4 0v5zM1434.500 637v-8.500h11v8.500z" />
        </g>
        <g fill="none" stroke="#9a9a9a" strokeWidth=".8">
          <path d="M1397.500 621.500h54.500v30h-54.500zM1397.500 621.500L1548 608.500M1452 621.500L1548 617M1397.500 651.500L1548 778M1452 651.500L1548 693.500" />
          <circle cx="1335.500" cy="637.500" r="2.500" stroke="#ddd" /><path d="M1331 637.500h9M1335.500 633v9M1332 634l7 7M1339 634l-7 7" stroke="#ddd" strokeWidth=".7" />
        </g>
      </Canvas>
      <Popview>
        <PopTitle>Popview - 1<PopClose>×</PopClose></PopTitle>
        <PopBody>
          <PopCanvas />
          <PopTools>{toolGlyphs.map(d => <PopTool key={d}><svg width="10" height="10"><path d={d} fill="none" stroke="#0c1c24" strokeWidth="1.300" /></svg></PopTool>)}</PopTools>
        </PopBody>
        <PopOk>Close</PopOk>
      </Popview>
      <Overlay width="738" height="451" viewBox="1066 384 738 451">
        <path d="M1553 690.500H1581M1596.500 690.500H1689M1730 690.500H1752" stroke="#c40808" strokeWidth="1.600" />
        <g fill="none" stroke="#f00000" strokeWidth="1.500"><rect x="1581.500" y="664" width="14.500" height="30" rx="4" /><rect x="1689" y="656" width="41" height="38" rx="4" /></g>
        <g stroke="#ff0" fill="#ff0" strokeWidth="1.400">
          <path d="M1283 500.500L1376 463.500M1489.500 755.500L1571 708.500M1718 751L1709.500 714" />
          <path d="M1386.500 459.500l-11 1.500 2 4.500zM1580.500 703.500l-11 3.500 2.500 4zM1707.500 704l0 11 4.500-1z" stroke="none" />
        </g>
        <path d="M1434.500 396v16" stroke="#4c6f9c" />
        <circle cx="1434.500" cy="392.500" r="4.500" fill="#8ee045" stroke="#4a7a2a" />
        <g fill="#e3f3fa" stroke="#41677e">
          {[[1070.5, 416.5], [1798.5, 416.5], [1070.5, 828.5], [1798.5, 828.5]].map(([x, y], i) => <circle key={i} cx={x} cy={y} r="4.500" />)}
          {[[1434.5, 416.5], [1434.5, 828.5], [1070.5, 622.5], [1798.5, 622.5]].map(([x, y], i) => <rect key={i} x={x - 3.5} y={y - 3.5} width="7" height="7" />)}
        </g>
      </Overlay>
    </Picture>
  );
}

export default function App() {
  return (
    <Screen>
      <Global />
      <TitleBar>
        <QuickAccess>
          <svg width="15" height="15"><path d="M.5 .5h14v14H2l-1.500-1.500z" fill="#4a4fb5" stroke="#27307c" /><rect x="3" y="1" width="9" height="6" fill="#f2f4fb" /><rect x="4" y="10" width="7" height="5" fill="#d4d8e6" /></svg>
          <svg width="15" height="15"><path d="M3 2v6h6M4 7q4-6 8-2 2 5-4 9" fill="none" stroke="#3c62c4" strokeWidth="2.500" /></svg>
          <Caret $c="#35588c" />
          <svg width="15" height="15"><path d="M12 2v6H6M11 7Q7 1 3 5q-2 5 2 9" fill="none" stroke="#a6b0bd" strokeWidth="2" /></svg>
          <Caret $c="#dfe3e8" />
        </QuickAccess>
        <Customize><Caret $c="#26466e" /></Customize>
        <ContextTitle>图片工具</ContextTitle>
        <DocTitle>2B693026A0-预审指示&nbsp; [兼容模式] - Microsoft Excel</DocTitle>
        <WinButtons>
          <WinButton $w={28}><svg width="12" height="10"><rect x=".5" y="4.500" width="11" height="4" fill="#fff" stroke="#444" /></svg></WinButton>
          <WinButton $w={27}><svg width="12" height="13"><path d="M3.500 1.500h7v8h-7z" fill="none" stroke="#fff" strokeWidth="1.500" /><path d="M1.500 3.500h7v8h-7z" fill="#666" stroke="#fff" strokeWidth="1.800" /></svg></WinButton>
          <WinButton $w={48} $close><svg width="12" height="11"><path d="M2 1l8 9M10 1L2 10" stroke="#fff" strokeWidth="2.800" /></svg></WinButton>
        </WinButtons>
      </TitleBar>
      <TabRow>
        <Tab $active>开始</Tab>
        {['插入', '页面布局', '公式', '数据', '审阅', '视图'].map(t => <Tab key={t}>{t}</Tab>)}
        <Tab $context>格式</Tab>
        <MdiButtons>
          <svg width="84" height="18">
            <circle cx="7.500" cy="9" r="6.500" fill="#2a62cf" stroke="#7ea5e4" strokeWidth="1.500" /><text x="4.500" y="13" fontSize="11" fontWeight="700" fill="#fff">?</text>
            <path d="M25 13h7" stroke="#6b7687" strokeWidth="2" />
            <path d="M47.500 7.500h6v5h-6zM49.500 7V4.500h6v5H54M47 7.500h7" fill="none" stroke="#5d6b7c" strokeWidth="1.200" />
            <path d="M70 5l7 8M77 5l-7 8" stroke="#6d7887" strokeWidth="2" />
          </svg>
        </MdiButtons>
      </TabRow>
      <RibbonView />
      <SecurityBar>
        <SecurityPanel><Shield /><b>安全警告</b>部分活动内容已被禁用。<OptionButton>选项...</OptionButton></SecurityPanel>
        <CloseMark><svg width="9" height="10"><path d="M1 1l7 8M8 1L1 9" stroke="#5d6b7c" strokeWidth="1.800" /></svg></CloseMark>
      </SecurityBar>
      <FormulaBar>
        <NameBox><Mix t="图片 1" /><Caret $c="#000" /></NameBox>
        <FxArea>fx</FxArea>
        <Expand><svg width="9" height="12"><path d="M1 1l3.500 3.500L8 1M1 6l3.500 3.500L8 6" fill="none" stroke="#000" strokeWidth="1.600" /></svg></Expand>
      </FormulaBar>
      <Work>
        <Sheet>
          <Corner />
          {letters.map((l, i) => <ColHead key={l} $col={i + 2}><span>{l}</span></ColHead>)}
          <ColHead $col={22} />
          {ROWS.map((_, i) => <RowHead key={i} $row={i + 2}>{i < 18 ? i + 5 : ''}</RowHead>)}
          {ROWS.map((_, r) => COLS.slice(11).map((_c, c) => <Blank key={r + '-' + c} $col={c + 12} $row={r + 2} />))}
          <Caption className="blue" $area={area(5, 2, 7, 3)}><span>一起确</span><span>认问题</span></Caption>
          {[5, 6].map(r => (
            <React.Fragment key={r}>
              <Index $area={area(r, 3, r + 1, 4)}>{r - 3}</Index>
              <Cell $area={area(r, 4, r + 1, 9)} />
              <Cell $area={area(r, 9, r + 1, 11)} />
              <Cell $area={area(r, 11, r + 1, 12)} />
            </React.Fragment>
          ))}
          <Caption $area={area(7, 2, 8, 4)}><span>工艺流程</span><span>指示</span></Caption>
          <Cell $area={area(7, 4, 8, 11)} />
          <Cell $area={area(7, 11, 8, 12)} />
          <Caption $area={area(8, 2, 18, 3)}><Cam>CAM</Cam><span>指示</span></Caption>
          <Caption $area={area(18, 2, 23, 3)}><span>工序</span><span>指示</span></Caption>
          {items.map(it => (
            <React.Fragment key={it.row}>
              <Index $area={area(it.row, 3, it.row + 1, 4)}>{it.n}</Index>
              <Cell $area={area(it.row, 4, it.row + 1, 11)} $fill={it.fill}>
                {it.text && (it.sans ? <SansText $ls={it.row === 18 ? 0.2 : 0}>{it.text}</SansText> : <Mix t={it.text} wide />)}
              </Cell>
              {it.link
                ? <LinkCell $area={area(it.row, 11, it.row + 1, 12)}><span>图</span><Mix t={`${it.link}(fig${it.link})'!A1`} /></LinkCell>
                : <Cell $area={area(it.row, 11, it.row + 1, 12)} />}
            </React.Fragment>
          ))}
        </Sheet>
        <VScroll>
          <SplitBox />
          <Stack $pad="7px 0 0 0"><Caret $up $c="#26406b" /></Stack>
          <VThumb />
          <Spacer />
          <Stack $pad="0 0 7px 0"><Caret $c="#26406b" /></Stack>
        </VScroll>
        <PictureView />
      </Work>
      <SheetTabs>
        <NavArrows>
          <svg width="62" height="14" fill="#17428b"><path d="M6 3h1.500v8H6zM12 3v8L8 7zM26 3v8l-4-4zM36 3v8l4-4zM49 3v8l4-4zM54 3h1.500v8H54z" /></svg>
        </NavArrows>
        <SheetTab $w={41} $active>指示</SheetTab>
        {[1, 2, 3, 4, 5, 6, 7, 8, 9, 10].map(n => (
          <React.Fragment key={n}>
            <SlantIcon first={n === 1} />
            <SheetTab $w={n === 10 ? 79 : 66}><Mix t={`图${n}(fig${n})`} /></SheetTab>
          </React.Fragment>
        ))}
        <SlantIcon />
        <SheetTab $w={22}><svg width="16" height="14"><path d="M5.500 4.500h9v7l-2 2h-7z" fill="#eef3fb" stroke="#5a6b88" /><path d="M4 0v8M0 4h8M1 1l6 6M7 1L1 7" stroke="#e8a23a" /></svg></SheetTab>
        <Slant width="15" height="14"><path d="M0 0h15L3 14H0z" fill="#d2e3f7" /><path d="M15 0L3 14" stroke="#7f9fc9" /></Slant>
        <HScroll>
          <HSplit />
          <svg width="19" height="14"><path d="M12 3v8L7 7z" fill="#33507e" /></svg>
          <HThumb />
          <Spacer />
          <svg width="14" height="14"><path d="M3 3v8l5-4z" fill="#33507e" /></svg>
          <HSplit />
          <svg width="17" height="14" />
        </HScroll>
      </SheetTabs>
      <StatusBar>
        就绪<StatusRule />
        <ViewArea>
          <ViewButtons>
            <ViewButton $on><svg width="14" height="13"><path d="M.5 .5h13v11H.500zM5 0v12M9.500 0v12M0 4h14M0 8h14" fill="#fff" stroke="#5f5f6a" /></svg></ViewButton>
            <ViewButton><svg width="13" height="13"><path d="M.5 .5h12v11H.500z" fill="#ccc" stroke="#5f5f6a" /><path d="M3.500 2.500h6v8h-6zM5 5h3M5 7h3" fill="#fff" stroke="#5f5f6a" /></svg></ViewButton>
            <ViewButton><svg width="13" height="13"><path d="M.5 .5h12v11H.500z" fill="#fff" stroke="#5f5f6a" /><path d="M5.500 0v8M9 0v8M0 8h13v3H0z" fill="#999" stroke="#5f5f6a" /></svg></ViewButton>
          </ViewButtons>
          <Percent>100%</Percent>
          <svg width="136" height="20">
            <path d="M17 10.500h101M68 5v10" stroke="#47699c" /><path d="M17 11.500h101" stroke="#d5e5fa" />
            <g fill="#e7eef8" stroke="#4f6f9f"><circle cx="9" cy="10.500" r="7" /><circle cx="126.500" cy="10.500" r="7" /><path d="M63.500 4.500h8v8l-4 4-4-4z" /></g>
            <path d="M5 10.500h8M122.500 10.500h8M126.500 6.500v8" stroke="#2f4a77" strokeWidth="2" /><path d="M67.500 6v7" stroke="#8aa" />
          </svg>
        </ViewArea>
      </StatusBar>
      <Taskbar>
        <StartOrb />
        <Tasks>
          <Task><Shell /></Task>
          <Task><Notes /></Task>
          <Task><Floppy /></Task>
          <Task><GIcon /></Task>
          <Task><Bird /></Task>
          <Task><PIcon /></Task>
          <Task $tone="active" $stack><OfficeDoc c="#3f8f2f" t="X" /></Task>
          <Task><OfficeDoc c="#2c55a8" t="W" /></Task>
          <Task><Eye /></Task>
          <Task $tone="orange" $stack><XIcon /></Task>
          <Task><Eye /></Task>
          <Task $tone="gold"><Gecko /></Task>
        </Tasks>
        <Tray>
          <svg width="196" height="36" viewBox="1640 1042 196 36">
            <path d="M1642 1057h15v7h-15z" fill="#d5d5d5" stroke="#888" /><path d="M1643 1059.500h13M1643 1062h13" stroke="#555" strokeDasharray="1.500 1" /><path d="M1645 1056q1-5 5-4 4 0 6-2" fill="none" stroke="#bbb" />
            <circle cx="1671.500" cy="1058" r="7" fill="#1c2cb4" stroke="#c9d2ff" /><text x="1668" y="1063" fontSize="13" fontWeight="700" fill="#fff">?</text>
            <path d="M1690.500 1052.500h4v3h-4zM1692.500 1052v-2.500h4v4h-2" fill="none" stroke="#fff" /><path d="M1690 1062h6l-3 3z" fill="#fff" />
            <path d="M1708 1063h8l-4-4.500z" fill="#fff" />
            <path d="M1728 1067l10-13v9z" fill="#e81818" /><path d="M1738 1060l6 7-4-1-4-4z" fill="#1fd04a" />
            <path d="M1760 1054v14" stroke="#fff" strokeWidth="1.500" /><path d="M1761 1055q3-1 5 1t6 0v7q-4 2-6 0t-5-1z" fill="#fff" /><circle cx="1769" cy="1064" r="4.500" fill="#d3281e" /><path d="M1767 1062l4 4M1771 1062l-4 4" stroke="#fff" strokeWidth="1.500" />
            <path d="M1783 1058h3l4-4v14l-4-4h-3z" fill="#fff" /><path d="M1791.500 1058q2 3 0 6M1794 1056q3.500 5 0 10" fill="none" stroke="#ddd" strokeWidth="1.200" />
            <path d="M1811.500 1056.500h9v8h-9zM1816 1065v3M1811 1068h9M1807.500 1054v4h3v-4M1809 1058v10" fill="none" stroke="#fff" strokeWidth="1.300" />
          </svg>
          <Clock>16:03<br />2022/4/7</Clock>
          <ShowDesktop />
        </Tray>
      </Taskbar>
      <OfficeOrb />
    </Screen>
  );
}
